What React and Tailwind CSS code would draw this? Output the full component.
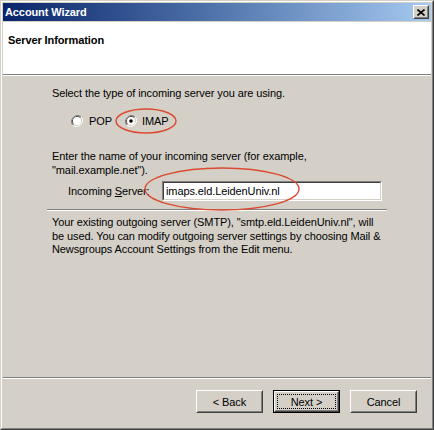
import React from "react";

function Radio({ checked }) {
  return (
    <svg width="12" height="12" viewBox="0 0 12 12" className="shrink-0">
      <path d="M10.2 1.8 A6 6 0 0 0 1.8 10.2" fill="none" stroke="#808080" strokeWidth="1" />
      <path d="M1.8 10.2 A6 6 0 0 0 10.2 1.8" fill="none" stroke="#ffffff" strokeWidth="1" />
      <path d="M9.5 2.5 A5 5 0 0 0 2.5 9.5" fill="none" stroke="#404040" strokeWidth="1" />
      <path d="M2.5 9.5 A5 5 0 0 0 9.5 2.5" fill="none" stroke="#d4d0c8" strokeWidth="1" />
      <circle cx="6" cy="6" r="4" fill="#ffffff" />
      {checked && <circle cx="6" cy="6" r="1.8" fill="#000000" />}
    </svg>
  );
}

function Button({ label, isDefault }) {
  if (isDefault) {
    return (
      <div className="w-[67px] h-[23px] border border-black">
        <div className="w-full h-full border border-t-white border-l-white border-r-[#404040] border-b-[#404040] bg-[#d4d0c8]">
          <div className="w-full h-full border border-t-[#d4d0c8] border-l-[#d4d0c8] border-r-[#808080] border-b-[#808080] p-px">
            <div className="w-full h-full border border-dotted border-black flex items-center justify-center">
              {label}
            </div>
          </div>
        </div>
      </div>
    );
  }
  return (
    <div className="w-[67px] h-[23px] border border-t-white border-l-white border-r-[#404040] border-b-[#404040] bg-[#d4d0c8]">
      <div className="w-full h-full border border-t-[#d4d0c8] border-l-[#d4d0c8] border-r-[#808080] border-b-[#808080] flex items-center justify-center">
        {label}
      </div>
    </div>
  );
}

export default function App() {
  return (
    <div
      className="relative w-[434px] h-[430px] border border-t-[#d4d0c8] border-l-[#d4d0c8] border-r-[#404040] border-b-[#404040] text-[11px] leading-[14px] tracking-[-0.1px] text-black"
      style={{ fontFamily: '"Liberation Sans", Arial, sans-serif' }}
    >
      <div className="w-full h-full border border-t-white border-l-white border-r-[#808080] border-b-[#808080] bg-[#d4d0c8] p-px flex flex-col">
        {/* title bar */}
        <div className="h-[18px] shrink-0 flex items-center justify-between pl-[2px] pr-[2px] bg-gradient-to-r from-[#0a246a] to-[#a6caf0]">
          <span className="text-white font-bold">Account Wizard</span>
          <div className="w-[16px] h-[14px] border border-t-white border-l-white border-r-[#404040] border-b-[#404040] bg-[#d4d0c8]">
            <div className="w-full h-full border border-t-[#d4d0c8] border-l-[#d4d0c8] border-r-[#808080] border-b-[#808080] flex items-center justify-center">
              <svg width="8" height="7" viewBox="0 0 8 7">
                <path d="M0.5 0.5 L7.5 6.5 M7.5 0.5 L0.5 6.5" stroke="#000" strokeWidth="1.6" />
              </svg>
            </div>
          </div>
        </div>

        {/* header */}
        <div className="mt-px h-[52px] shrink-0 bg-white pt-[11px] pl-[5px] font-bold">
          Server Information
        </div>
        <div className="h-px bg-[#808080] shrink-0" />
        <div className="h-px bg-white shrink-0" />

        {/* content */}
        <div className="flex-1 px-[44px] pt-[10px]">
          <div className="pl-[5px]">Select the type of incoming server you are using.</div>
          <div className="mt-[14px] ml-[24px] flex items-center h-[14px]">
            <Radio />
            <span className="ml-[6px]">POP</span>
            <div className="ml-[13px] flex items-center">
              <Radio checked />
              <span className="ml-[5px]">IMAP</span>
            </div>
          </div>

          <div className="mt-[21px] pl-[5px]">
            <div>Enter the name of your incoming server (for example,</div>
            <div>"mail.example.net").</div>
          </div>

          <div className="mt-[4px] ml-[21px] flex items-center">
            <span className="w-[94px] shrink-0">
              Incoming <span className="underline">S</span>erver:
            </span>
            <div className="w-[220px] h-[20px] border border-t-[#808080] border-l-[#808080] border-r-white border-b-white">
              <div className="w-full h-full border border-t-[#404040] border-l-[#404040] border-r-[#d4d0c8] border-b-[#d4d0c8] bg-white flex items-center pl-[2px]">
                imaps.eld.LeidenUniv.nl
              </div>
            </div>
          </div>

          <div className="mt-[8px] h-px bg-[#808080]" />
          <div className="h-px bg-white" />

          <div className="mt-[5px] pl-[5px] leading-[13.5px]">
            Your existing outgoing server (SMTP), "smtp.eld.LeidenUniv.nl", will be used. You can modify outgoing server settings by choosing Mail &amp; Newsgroups Account Settings from the Edit menu.
          </div>
        </div>

        {/* footer */}
        <div className="h-px bg-[#808080] shrink-0" />
        <div className="h-px bg-white shrink-0" />
        <div className="h-[48px] shrink-0 flex justify-end items-start pt-[11px] pr-[14px] gap-[10px]">
          <Button label="< Back" />
          <Button label="Next >" isDefault />
          <Button label="Cancel" />
        </div>
      </div>

      {/* red annotation ellipses */}
      <svg className="absolute left-0 top-0 pointer-events-none" width="434" height="430">
        <ellipse cx="145" cy="120" rx="30" ry="12" fill="none" stroke="#dc4a32" strokeWidth="1.4" />
        <ellipse cx="221" cy="188" rx="77" ry="21" fill="none" stroke="#dc4a32" strokeWidth="1.4" />
      </svg>
    </div>
  );
}
